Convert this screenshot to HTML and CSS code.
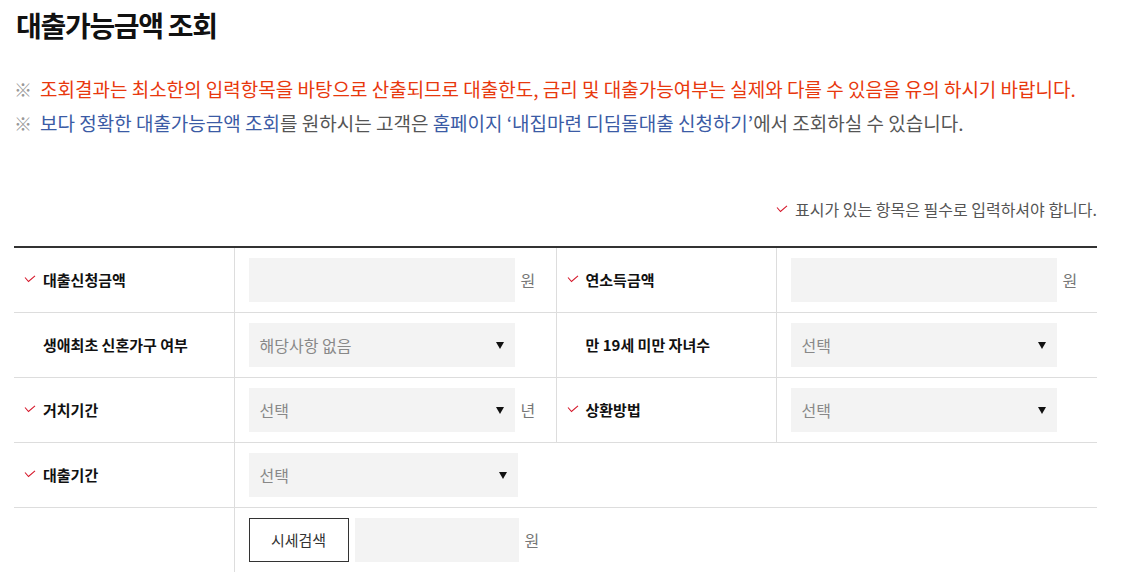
FILE: index.html
```html
<html>

<head>
  <meta charset="utf-8">
  <meta name="viewport" content="width=device-width, initial-scale=1">
  <link rel="stylesheet" href="styles.css">
</head>

<body>
  <div class="wrap">
    <h2 class="title">대출가능금액 조회</h2>

    <ul class="notice">
      <li><span class="mark">※</span><span class="red">조회결과는 최소한의 입력항목을 바탕으로 산출되므로 대출한도, 금리 및 대출가능여부는 실제와 다를 수 있음을 유의 하시기 바랍니다.</span></li>
      <li><span class="mark">※</span><span class="blue">보다 정확한 대출가능금액 조회</span>를 원하시는 고객은 <span class="blue">홈페이지 ‘내집마련 디딤돌대출 신청하기’</span>에서 조회하실 수 있습니다.</li>
    </ul>

    <p class="required-note">
      <svg class="chk" viewBox="0 0 12 8"><polyline points="1,2.5 4.5,6.5 11,0.8" /></svg>
      표시가 있는 항목은 필수로 입력하셔야 합니다.
    </p>

    <table class="form">
      <colgroup>
        <col class="c-label">
        <col class="c-field">
        <col class="c-label">
        <col class="c-field2">
      </colgroup>
      <tr>
        <th><svg class="chk" viewBox="0 0 12 8"><polyline points="1,2.5 4.5,6.5 11,0.8" /></svg>대출신청금액</th>
        <td><span class="box"></span><span class="unit">원</span></td>
        <th><svg class="chk" viewBox="0 0 12 8"><polyline points="1,2.5 4.5,6.5 11,0.8" /></svg>연소득금액</th>
        <td><span class="box"></span><span class="unit">원</span></td>
      </tr>
      <tr>
        <th><span class="chk-space"></span>생애최초 신혼가구 여부</th>
        <td><span class="box select">해당사항 없음<i class="arrow"></i></span></td>
        <th><span class="chk-space"></span>만 19세 미만 자녀수</th>
        <td><span class="box select">선택<i class="arrow"></i></span></td>
      </tr>
      <tr>
        <th><svg class="chk" viewBox="0 0 12 8"><polyline points="1,2.5 4.5,6.5 11,0.8" /></svg>거치기간</th>
        <td><span class="box select">선택<i class="arrow"></i></span><span class="unit">년</span></td>
        <th><svg class="chk" viewBox="0 0 12 8"><polyline points="1,2.5 4.5,6.5 11,0.8" /></svg>상환방법</th>
        <td><span class="box select">선택<i class="arrow"></i></span></td>
      </tr>
      <tr>
        <th><svg class="chk" viewBox="0 0 12 8"><polyline points="1,2.5 4.5,6.5 11,0.8" /></svg>대출기간</th>
        <td colspan="3"><span class="box select wide">선택<i class="arrow"></i></span></td>
      </tr>
      <tr>
        <th></th>
        <td colspan="3"><button class="btn">시세검색</button><span class="box small"></span><span class="unit">원</span></td>
      </tr>
    </table>
  </div>
</body>

</html>
```

FILE: styles.css
```css
body {
  margin: 0;
  font-family: "Noto Sans CJK KR", "Noto Sans", sans-serif;
  color: #111;
  background-color: white;
}

.wrap {
  width: 1083px;
  padding: 0 0 0 14px;
}

.title {
  margin: 4px 0 0 2px;
  font-size: 28px;
  font-weight: 700;
  letter-spacing: -1.3px;
  line-height: 42px;
}

.notice {
  list-style: none;
  margin: 26px 0 0;
  padding: 0;
  font-size: 19px;
  line-height: 34px;
  color: #555;
}

.notice li {
  height: 35px;
}

.notice li + li {
  margin-top: -1px;
}

.notice .mark {
  color: #999;
  display: inline-block;
  width: 26px;
  font-size: 18px;
}

.red {
  color: #e8380d;
}

.blue {
  color: #3b5ba5;
}

.required-note {
  margin: 58px 0 0;
  text-align: right;
  font-size: 16px;
  line-height: 20px;
  color: #555;
}

.required-note .chk {
  margin-right: 3px;
}

.chk {
  width: 12px;
  height: 8px;
  margin-right: 7px;
  vertical-align: 3px;
  fill: none;
  stroke: #d6172a;
  stroke-width: 1.1;
}

.chk-space {
  display: inline-block;
  width: 19px;
}

.form {
  margin-top: 27px;
  width: 1083px;
  border-collapse: collapse;
  border-top: 2px solid #333;
  table-layout: fixed;
}

.c-label {
  width: 220px;
}

.c-field {
  width: 322px;
}

.c-field2 {
  width: 321px;
}

.form th,
.form td {
  height: 65px;
  padding: 0;
  border-bottom: 1px solid #ddd;
  vertical-align: middle;
}

.form th {
  text-align: left;
  padding-left: 10px;
  font-size: 15px;
  font-weight: 700;
  border-right: 1px solid #ddd;
}

.form td {
  padding-left: 14px;
  border-right: 1px solid #ddd;
  white-space: nowrap;
}

.form td:last-child {
  border-right: none;
}

.form tr:last-child th,
.form tr:last-child td {
  border-bottom: none;
}

.box {
  display: inline-block;
  vertical-align: middle;
  box-sizing: border-box;
  width: 266px;
  height: 44px;
  background-color: #f3f3f3;
  position: relative;
}

.box.wide {
  width: 269px;
}

.box.small {
  width: 164px;
  margin-left: 6px;
}

.select {
  padding-left: 11px;
  font-size: 16px;
  line-height: 44px;
  color: #888;
}

.arrow {
  position: absolute;
  right: 11px;
  top: 19px;
  width: 0;
  height: 0;
  border-left: 4px solid transparent;
  border-right: 4px solid transparent;
  border-top: 7px solid #111;
}

.unit {
  display: inline-block;
  vertical-align: middle;
  margin-left: 6px;
  font-size: 16px;
  color: #777;
}

.btn {
  vertical-align: middle;
  box-sizing: border-box;
  width: 100px;
  height: 44px;
  border: 1px solid #333;
  background: white;
  font-family: inherit;
  font-size: 15px;
  color: #333;
  padding: 0;
}
```
